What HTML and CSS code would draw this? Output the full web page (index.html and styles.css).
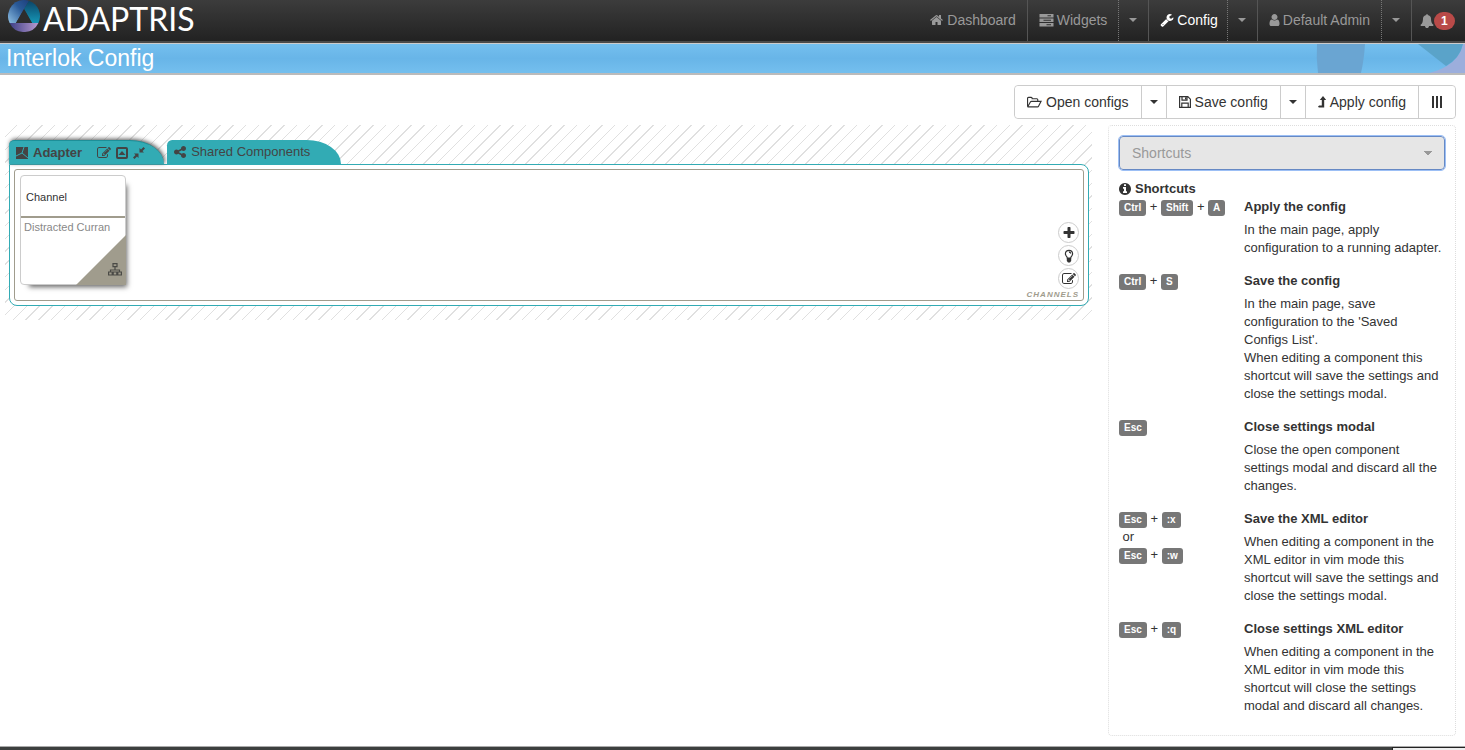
FILE: index.html
```html
<!DOCTYPE html>
<html lang="en">
<head>
<meta charset="utf-8">
<title>Interlok Config</title>
<link rel="stylesheet" href="styles.css">
</head>
<body>
<svg class="defs" aria-hidden="true">
  <symbol id="i-edit" viewBox="0 0 1792 1792"><path d="M888 1184l116-116-152-152-116 116v56h96v96h56zm440-720q-16-16-33 1l-350 350q-17 17-1 33t33-1l350-350q17-17 1-33zm80 594v190q0 119-84.5 203.5t-203.5 84.5h-832q-119 0-203.5-84.5t-84.5-203.5v-832q0-119 84.5-203.5t203.5-84.5h832q63 0 117 25 15 7 18 23 3 17-9 29l-49 49q-14 14-32 8-23-6-45-6h-832q-66 0-113 47t-47 113v832q0 66 47 113t113 47h832q66 0 113-47t47-113v-126q0-13 9-22l64-64q15-15 35-7t20 29zm-96-738l288 288-672 672h-288v-288zm444 132l-92 92-288-288 92-92q28-28 68-28t68 28l152 152q28 28 28 68t-28 68z"/></symbol>
</svg>
<header class="navbar">
  <a class="brand" href="#">
    <svg class="brand-mark" viewBox="0 0 32 32" aria-hidden="true">
      <defs>
        <linearGradient id="g1" x1="1" y1="0" x2="0" y2="1"><stop offset="0" stop-color="#1d3f7c"/><stop offset=".4" stop-color="#2a5a98"/><stop offset="1" stop-color="#8fc0e4"/></linearGradient>
        <linearGradient id="g2" x1="0" y1="0" x2="0" y2="1"><stop offset="0" stop-color="#0c4468"/><stop offset="1" stop-color="#1596b6"/></linearGradient>
        <linearGradient id="g3" x1="0" y1="0" x2="1" y2="0"><stop offset="0" stop-color="#3d3f86"/><stop offset="1" stop-color="#b89ace"/></linearGradient>
      </defs>
      <path fill="url(#g1)" d="M21 .8A16 16 0 0 0 1.600 23H8Z"/>
      <path fill="url(#g2)" d="M16 9L21 .8A16 16 0 0 1 30.400 23H24Z"/>
      <path fill="url(#g3)" d="M1.600 23H30.400A16 16 0 0 1 1.600 23Z"/>
      <path fill="#2d2d2d" d="M16 9L24 23H8Z"/>
    </svg>
    <span class="brand-name">ADAPTRIS</span>
  </a>
  <nav class="menu">
    <a class="item" href="#"><svg class="icon" viewBox="0 0 1792 1792"><path d="M1408 992v480q0 26-19 45t-45 19h-384v-384h-256v384h-384q-26 0-45-19t-19-45v-480q0-1 .5-3t.5-3l575-474 575 474q1 2 1 6zm223-69l-62 74q-8 9-21 11h-3q-13 0-21-7l-692-577-692 577q-12 8-24 7-13-2-21-11l-62-74q-8-10-7-23.500t11-21.500l719-599q32-26 76-26t76 26l244 204v-195q0-14 9-23t23-9h192q14 0 23 9t9 23v408l219 182q10 8 11 21.500t-7 23.500z"/></svg>Dashboard</a>
    <a class="item solid" href="#"><svg class="icon wide" viewBox="0 0 14 14"><path fill-rule="evenodd" d="M0 1h14v3.500H0V1zM8 2.200v1h3.500v-1zM0 5.500h14V9H0zM4 6.700v1h7.500v-1zM0 10h14v3.500H0zM7 11.200v1h4.500v-1z"/></svg>Widgets</a>
    <button class="item toggle" aria-label="Widgets menu"><span class="caret"></span></button>
    <a class="item solid active" href="#"><svg class="icon" viewBox="0 0 1792 1792"><path d="M448 1472q0-26-19-45t-45-19-45 19-19 45 19 45 45 19 45-19 19-45zm644-420l-682 682q-37 37-90 37-52 0-91-37l-106-108q-38-36-38-90 0-53 38-91l681-681q39 98 114.500 173.500t173.500 114.500zm634-435q0 39-23 106-47 134-164.500 217.500t-258.500 83.500q-185 0-316.500-131.500t-131.500-316.500 131.500-316.500 316.500-131.500q58 0 121.500 16.500t107.500 46.500q16 11 16 28t-16 28l-293 169v224l193 107q5-3 79-48.500t135.500-81 70.500-35.500q15 0 23.500 10t8.500 25z"/></svg>Config</a>
    <button class="item toggle" aria-label="Config menu"><span class="caret"></span></button>
    <a class="item solid" href="#"><svg class="icon narrow" viewBox="192 0 1408 1792"><path d="M1536 1399q0 109-62.500 187t-150.500 78h-854q-88 0-150.500-78t-62.500-187q0-85 8.500-160.500t31.500-152 58.500-131 94-89 134.500-34.500q131 128 313 128t313-128q76 0 134.500 34.500t94 89 58.500 131 31.500 152 8.500 160.500zm-256-887q0 159-112.500 271.500t-271.500 112.500-271.500-112.500-112.500-271.500 112.500-271.500 271.500-112.500 271.500 112.500 112.500 271.500z"/></svg>Default Admin</a>
    <button class="item toggle" aria-label="User menu"><span class="caret"></span></button>
    <a class="item solid alerts" href="#" aria-label="Notifications"><svg class="icon bell" viewBox="0 0 1792 1792"><path d="M1728 1408q0 52-38 90t-90 38h-448q0 106-75 181t-181 75-181-75-75-181h-448q-52 0-90-38t-38-90q50-42 91-88t85-119.500 74.500-158.500 50-206 19.500-260q0-152 117-282.500t307-158.500q-8-19-8-39 0-40 28-68t68-28 68 28 28 68q0 20-8 39 190 28 307 158.500t117 282.500q0 139 19.500 260t50 206 74.500 158.500 85 119.500 91 88z"/></svg><span class="badge">1</span></a>
  </nav>
</header>
<div class="titlebar">
  <h1>Interlok Config</h1>
  <svg class="titlebar-art" viewBox="0 0 150 29" aria-hidden="true">
    <path fill="#6aa5d2" d="M2 0H50Q49 16 46 29H3Q1 14 2 0Z"/>
    <path fill="#9caedc" d="M114 29Q143 22 148 0H150V29Z"/>
    <path fill="#5aa3c9" d="M103 0L131 22Q145 14 148 0Z"/>
  </svg>
</div>
<div class="toolbar">
  <div class="btn-group">
    <button class="btn"><svg class="icon wide" viewBox="0 0 16 14"><path class="line" d="M.600 11.500V3Q.600 2 1.600 2H4.500Q5.500 2 5.500 3V3.500H10.500Q11.500 3.500 11.500 4.500V6.300M.800 12L3.600 7Q4 6.300 4.800 6.300H15L12.300 11.500Q12 12.200 11.300 12.200H1.200Z"/></svg>Open configs</button>
    <button class="btn drop" aria-label="Open configs menu"><span class="caret"></span></button>
    <button class="btn"><svg class="icon save" viewBox="0 0 12 14"><path class="line" d="M.600 1.600H8.800L11.400 4.200V12.400H.600ZM3 1.600V5.200H8V1.600M2.800 12.400V8.200H9.200V12.400M6.600 2.500V4.200"/></svg>Save config</button>
    <button class="btn drop" aria-label="Save config menu"><span class="caret"></span></button>
    <button class="btn"><svg class="icon level" viewBox="0 0 8 14"><path d="M5 1L8.200 5H6.200V12.500H.800L0 11.500 1.200 10.600H3.800V5H1.800Z"/></svg>Apply config</button>
    <button class="btn" aria-label="Toggle columns"><svg class="icon bars" viewBox="0 0 12 14"><path d="M1 1H3V13H1ZM5 1H7V13H5ZM9 1H11V13H9Z"/></svg></button>
  </div>
</div>
<main class="content">
  <section class="workspace">
    <div class="tabs">
      <div class="tab current">
        <svg class="icon small" viewBox="0 0 12 12"><path d="M0 0H12V12H0Z"/><path class="cut" d="M8 0L6 6 0 9M6 6L12 11"/></svg>
        <span class="tab-name">Adapter</span>
        <button class="mini" aria-label="Edit"><svg class="icon"><use href="#i-edit"/></svg></button>
        <button class="mini" aria-label="Collapse"><svg class="icon small" viewBox="0 0 12 12"><rect class="frame" x="1" y="1" width="10" height="10" rx="1"/><path d="M2.500 8H9.500L6 4Z"/></svg></button>
        <button class="mini" aria-label="Compress"><svg class="icon small" viewBox="0 0 12 12"><path d="M6.500 5.500V1L8 2.500 10.500 0 12 1.500 9.500 4 11 5.500ZM5.500 6.500V11L4 9.500 1.500 12 0 10.500 2.500 8 1 6.500Z"/></svg></button>
      </div>
      <div class="tab">
        <svg class="icon small" viewBox="128 128 1536 1536"><path d="M1344 1024q133 0 226.500 93.500t93.500 226.500-93.500 226.500-226.500 93.500-226.500-93.500-93.500-226.500q0-12 2-34l-360-180q-92 86-218 86-133 0-226.500-93.500t-93.500-226.500 93.500-226.500 226.500-93.500q126 0 218 86l360-180q-2-22-2-34 0-133 93.500-226.500t226.500-93.500 226.500 93.500 93.500 226.500-93.500 226.500-226.500 93.500q-126 0-218-86l-360 180q2 22 2 34t-2 34l360 180q92-86 218-86z"/></svg>
        <span>Shared Components</span>
      </div>
    </div>
    <div class="adapter">
      <div class="channels">
        <article class="card">
          <h2 class="card-type">Channel</h2>
          <p class="card-name">Distracted Curran</p>
          <svg class="card-corner" viewBox="0 0 50 50" aria-hidden="true">
            <path fill="#a09c8d" d="M50 0V50H0Z"/>
            <path fill="none" stroke="#4a4a46" stroke-width="1.200" d="M37 28.600H41V31.600H37ZM39 32V35.500M34.500 37V35H43.500V37M32.600 37H36.200V40H32.600ZM37.200 37H40.800V40H37.200ZM41.800 37H45.400V40H41.800Z"/>
          </svg>
        </article>
        <div class="actions">
          <button class="round" aria-label="Add channel"><svg class="icon" viewBox="0 0 1792 1792"><path d="M1600 736v192q0 40-28 68t-68 28h-416v416q0 40-28 68t-68 28h-192q-40 0-68-28t-28-68v-416h-416q-40 0-68-28t-28-68v-192q0-40 28-68t68-28h416v-416q0-40 28-68t68-28h192q40 0 68 28t28 68v416h416q40 0 68 28t28 68z"/></svg></button>
          <button class="round" aria-label="Hints"><svg class="icon" viewBox="0 0 14 14"><path class="line" d="M5.300 9Q5.200 7.800 4.200 6.800Q3.400 5.800 3.400 4.700Q3.600 1.500 7 1.400Q10.400 1.500 10.600 4.700Q10.600 5.800 9.800 6.800Q8.800 7.800 8.700 9ZM7 3.200Q8.500 3.300 8.800 4.500"/><path d="M4.800 9H9.200V12L8 13.500H6L4.800 12Z"/></svg></button>
          <button class="round" aria-label="Edit channels"><svg class="icon"><use href="#i-edit"/></svg></button>
          <span class="caption">CHANNELS</span>
        </div>
      </div>
    </div>
  </section>
  <aside class="help">
    <select class="picker" aria-label="Help topic"><option>Shortcuts</option></select>
    <h2 class="help-title"><svg class="icon small" viewBox="128 128 1536 1536"><path d="M1152 1376v-160q0-14-9-23t-23-9h-96v-512q0-14-9-23t-23-9h-320q-14 0-23 9t-9 23v160q0 14 9 23t23 9h96v320h-96q-14 0-23 9t-9 23v160q0 14 9 23t23 9h448q14 0 23-9t9-23zm-128-896v-160q0-14-9-23t-23-9h-192q-14 0-23 9t-9 23v160q0 14 9 23t23 9h192q14 0 23-9t9-23zm640 416q0 209-103 385.500t-279.500 279.500-385.500 103-385.500-103-279.500-279.500-103-385.500 103-385.500 279.500-279.500 385.500-103 385.500 103 279.500 279.500 103 385.500z"/></svg>Shortcuts</h2>
    <dl class="shortcuts">
      <dt><kbd>Ctrl</kbd> + <kbd>Shift</kbd> + <kbd>A</kbd></dt>
      <dd><h3>Apply the config</h3><p>In the main page, apply configuration to a running adapter.</p></dd>
      <dt><kbd>Ctrl</kbd> + <kbd>S</kbd></dt>
      <dd><h3>Save the config</h3><p>In the main page, save configuration to the 'Saved Configs List'.<br>When editing a component this shortcut will save the settings and close the settings modal.</p></dd>
      <dt><kbd>Esc</kbd></dt>
      <dd><h3>Close settings modal</h3><p>Close the open component settings modal and discard all the changes.</p></dd>
      <dt><kbd>Esc</kbd> + <kbd>:x</kbd><br>&nbsp;or<br><kbd>Esc</kbd> + <kbd>:w</kbd></dt>
      <dd><h3>Save the XML editor</h3><p>When editing a component in the XML editor in vim mode this shortcut will save the settings and close the settings modal.</p></dd>
      <dt><kbd>Esc</kbd> + <kbd>:q</kbd></dt>
      <dd><h3>Close settings XML editor</h3><p>When editing a component in the XML editor in vim mode this shortcut will close the settings modal and discard all changes.</p></dd>
    </dl>
  </aside>
</main>
<footer class="footer"><div class="status"></div></footer>
</body>
</html>
```
FILE: styles.css
```css
* { box-sizing: border-box; }
body {
  margin: 0;
  min-height: 100vh;
  display: flex;
  flex-direction: column;
  font: 14px/20px "Liberation Sans", Arial, sans-serif;
  color: #333;
  background: #fff;
}
h1, h2, h3, p, dl, dd { margin: 0; }
button { font: inherit; color: inherit; }
.defs { display: none; }
.icon { width: 14px; height: 14px; fill: currentColor; flex: none; }
.icon.small { width: 12px; height: 12px; }
.icon.wide { width: 15px; }
.icon.save { width: 12px; }
.icon.level { width: 8px; }
.icon.bars { width: 12px; }
.icon.narrow { width: 11px; }
.line { fill: none; stroke: currentColor; stroke-width: 1.2; }
.frame { fill: none; stroke: currentColor; stroke-width: 2; }
.cut { fill: none; stroke: #32abb4; stroke-width: 1; }
.caret {
  border: 4px solid transparent;
  border-top-color: currentColor;
  border-bottom: 0;
}

.navbar {
  display: flex;
  justify-content: space-between;
  height: 43px;
  padding-left: 8px;
  background: linear-gradient(#3c3c3c, #222);
  border-bottom: 2px solid #4a4a4a;
}
.brand {
  display: flex;
  align-items: flex-start;
  gap: 3px;
  color: #fff;
  text-decoration: none;
}
.brand-mark { width: 32px; height: 32px; }
.brand-name { font: 32px/38px Lato, sans-serif; }
.menu { display: flex; }
.item {
  display: flex;
  align-items: center;
  gap: 3px;
  padding: 0 11px 2px;
  color: #999;
  text-decoration: none;
  background: none;
  border: 0;
}
.item.solid { border-left: 1px solid #555; }
.item.toggle { border-left: 1px dotted #777; padding: 0 11px 2px 10px; }
.item.active { padding-right: 9px; color: #fff; }
.item.alerts { gap: 0; padding: 0 10px 0 8px; }
.badge {
  min-width: 21px;
  padding: 0 7px;
  font: bold 12px/18px "Liberation Sans", Arial, sans-serif;
  color: #fff;
  background: #b94a48;
  border-radius: 9px;
}

.titlebar {
  display: flex;
  justify-content: space-between;
  height: 32px;
  padding-left: 6px;
  background: linear-gradient(#74bfee, #68b5e8 50%, #74bfee);
  border-top: 1px solid #ccc;
  border-bottom: 2px solid #bbb;
}
.titlebar h1 { font-size: 23px; font-weight: normal; line-height: 29px; color: #fff; }
.titlebar-art { width: 150px; height: 29px; }

.toolbar { display: flex; justify-content: flex-end; padding: 10px 9px 6px; }
.btn-group { display: flex; border: 1px solid #ccc; border-radius: 4px; }
.btn {
  display: flex;
  align-items: center;
  gap: 4px;
  height: 32px;
  padding: 0 12px;
  background: #fff;
  border: 0;
  border-right: 1px solid #ccc;
  border-radius: 4px;
}
.btn:not(:last-child) { border-radius: 0; }
.btn:first-child { border-radius: 4px 0 0 4px; }
.btn:last-child { border-right: 0; }
.btn.drop { padding: 0 8px; }

.content {
  display: grid;
  grid-template-columns: minmax(0, 1fr) 348px;
  gap: 16px;
  align-items: start;
  padding: 0 9px 0 5px;
}
.workspace {
  padding: 15px 3px 14px 4px;
  background: repeating-linear-gradient(135deg, #fff 0 8px, #e0e0e0 8px 9px);
}
.tabs { display: flex; gap: 3px; }
.tab {
  display: flex;
  align-items: center;
  gap: 5px;
  height: 24px;
  padding: 0 31px 0 7px;
  font-size: 13px;
  color: #444;
  background: #32abb4;
  border-radius: 6px 40px 0 0 / 6px 28px 0 0;
}
.tab.current {
  padding-right: 19px;
  border-top: 1px solid #1d8f98;
  box-shadow: 1px -1px 4px #555;
}
.tab-name { margin-right: 10px; font-weight: bold; }
.mini { display: flex; padding: 0; background: none; border: 0; }
.adapter {
  padding: 4px;
  background: #fff;
  border: 1px solid #32abb4;
  border-radius: 0 8px 8px 8px;
}
.channels {
  display: flex;
  justify-content: space-between;
  align-items: flex-start;
  min-height: 132px;
  padding: 5px 4px 1px 5px;
  border: 1px solid #a09c8d;
  border-radius: 3px;
}
.card {
  position: relative;
  width: 106px;
  height: 110px;
  background: #fff;
  border: 1px solid #ccc;
  border-radius: 4px;
  box-shadow: 5px 6px 5px -4px #666;
}
.card-type {
  padding: 11px 5px 9px;
  font-size: 11px;
  font-weight: normal;
  line-height: 20px;
  border-bottom: 2px solid #a09c8d;
}
.card-name { padding: 1px 3px; font-size: 11px; line-height: 16px; color: #888; }
.card-corner { position: absolute; right: -1px; bottom: -1px; width: 50px; height: 50px; }
.actions {
  display: flex;
  flex-direction: column;
  align-items: flex-end;
  align-self: flex-end;
  gap: 2px;
}
.round {
  display: flex;
  align-items: center;
  justify-content: center;
  width: 21px;
  height: 21px;
  padding: 0;
  background: #fff;
  border: 1px solid #ccc;
  border-radius: 50%;
}
.caption {
  font-size: 8px;
  font-weight: bold;
  font-style: italic;
  line-height: 8px;
  letter-spacing: 1px;
  color: #a09c8d;
}

.help {
  padding: 10px 10px 20px;
  border: 1px dotted #ddd;
  border-radius: 4px;
}
.picker {
  display: block;
  width: 100%;
  height: 34px;
  padding: 0 12px;
  font: inherit;
  color: #999;
  appearance: none;
  background: #e6e6e6 conic-gradient(from -45deg at 50% 100%, #999 90deg, transparent 0) right 12px center / 8px 4px no-repeat;
  background-image: linear-gradient(45deg, transparent 50%, #999 50%), linear-gradient(-45deg, transparent 50%, #999 50%);
  background-position: right 16px center, right 12px center;
  background-size: 4px 4px;
  border: 1px solid #6689c4;
  border-radius: 4px;
  outline: 1px solid #9cbff5;
}
.help-title {
  display: flex;
  align-items: center;
  gap: 4px;
  margin-top: 10px;
  font-size: 13px;
  line-height: 18px;
}
.shortcuts {
  display: grid;
  grid-template-columns: 125px minmax(0, 1fr);
  row-gap: 15px;
  font-size: 13px;
  line-height: 18px;
}
.shortcuts h3 { margin-bottom: 5px; font-size: 13px; }
kbd {
  display: inline-block;
  padding: 0 5px;
  font: bold 10px/16px "Liberation Sans", Arial, sans-serif;
  color: #fff;
  background: #777;
  border-radius: 3px;
}
.footer {
  display: flex;
  justify-content: flex-end;
  height: 4px;
  margin-top: auto;
  background: #3d403f;
  border-top: 1px solid #aaa;
}
.status { width: 73px; background: #eee; border: solid #222; border-width: 1px 0 0 1px; }
```
